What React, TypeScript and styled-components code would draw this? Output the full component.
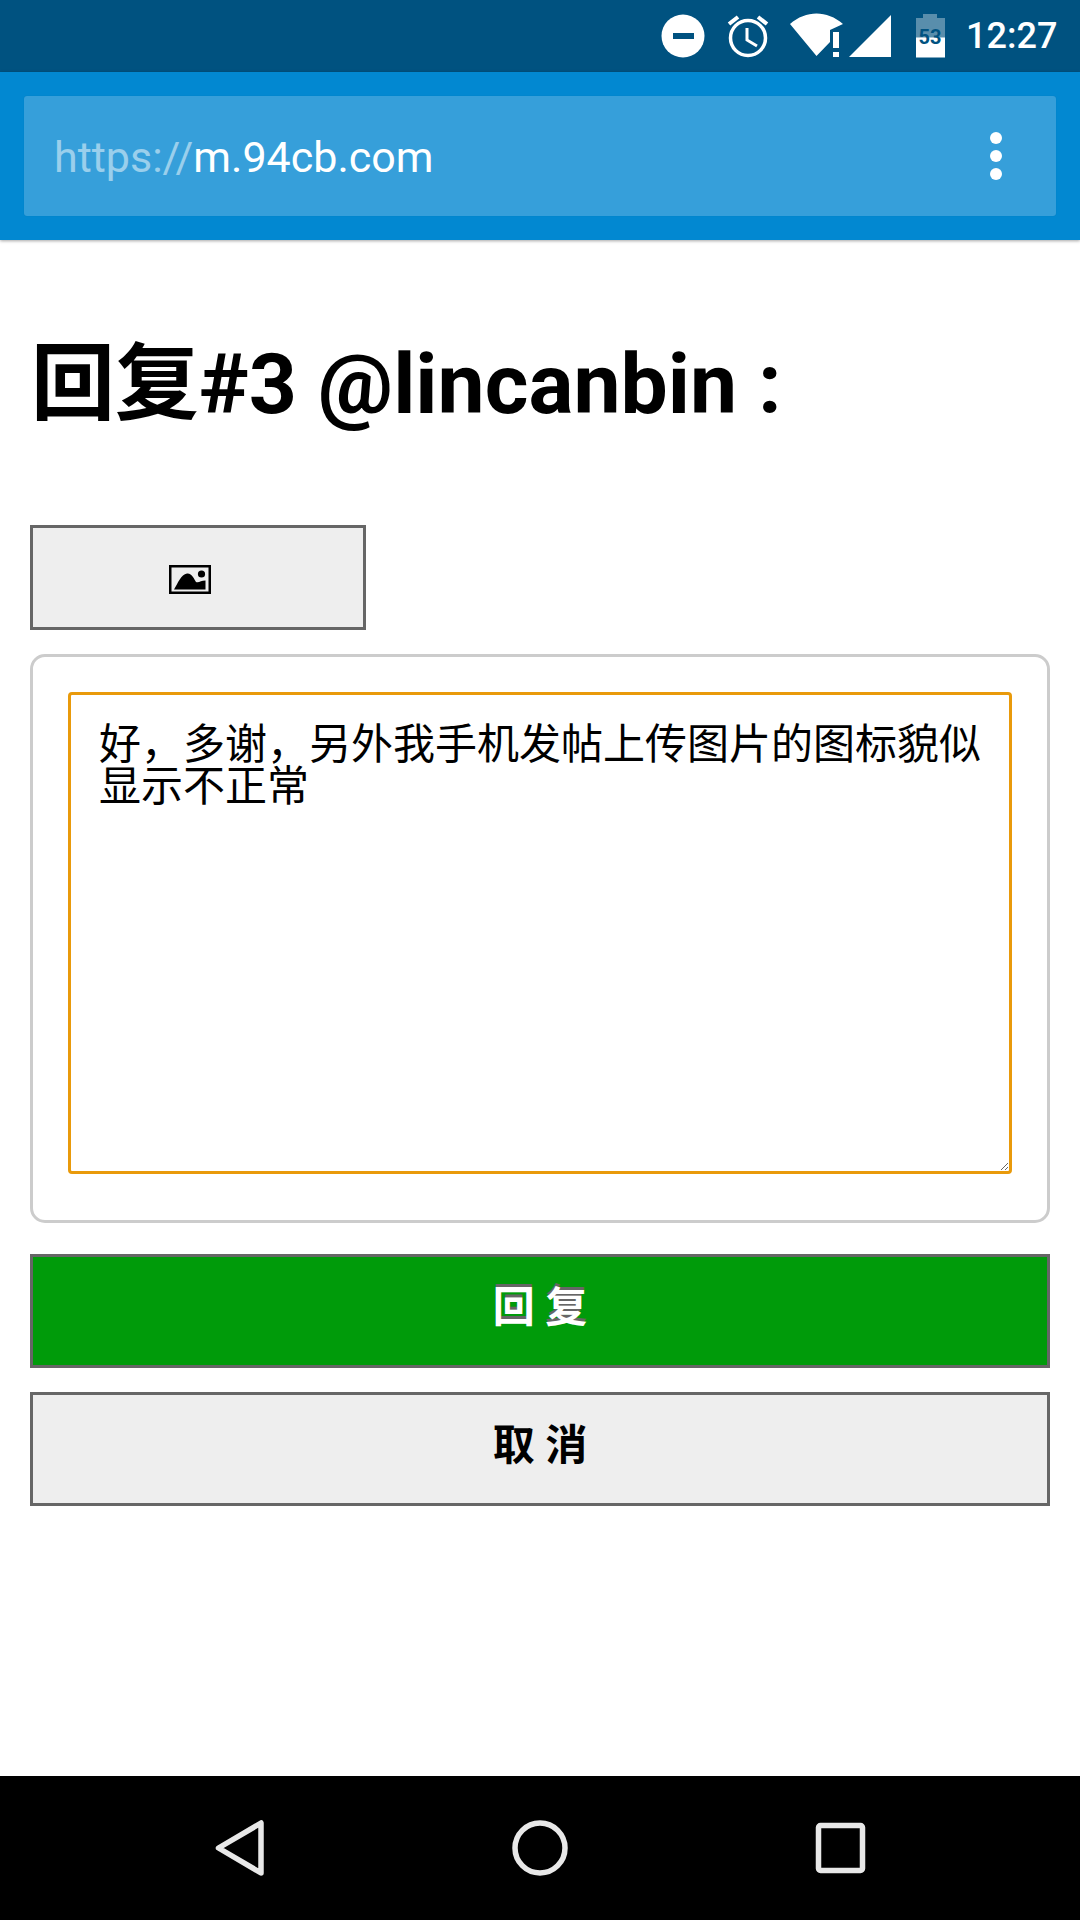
import React from "react";
import styled, { createGlobalStyle } from "styled-components";

const Global = createGlobalStyle`
  html, body { margin: 0; padding: 0; background: #fff; }
  * { box-sizing: border-box; }
`;
const Page = styled.div`
  width: 1080px; height: 1920px; display: flex; flex-direction: column;
  font-family: Roboto, "Noto Sans CJK SC", sans-serif; color: #000; overflow: hidden;
`;
const StatusBar = styled.div`
  height: 72px; background: #005280; display: flex; align-items: center; justify-content: flex-end;
  padding-right: 24px; color: #fff; flex: none;
`;
const StatusIcons = styled.svg`
  width: 310px; height: 72px; display: block; flex: none;
`;
const Time = styled.span`
  font-size: 36px; font-weight: 500; width: 90px; white-space: nowrap; line-height: 72px;
`;
const Toolbar = styled.div`
  height: 168px; background: #0288d1; padding: 24px; box-shadow: 0 1px 3px rgba(0,0,0,.35);
  position: relative; flex: none;
`;
const UrlBox = styled.div`
  height: 120px; border-radius: 3px; background: #369fda; display: flex; align-items: center;
  justify-content: space-between; padding: 0 54px 0 30px; box-shadow: 0 0 1px rgba(0,0,0,.15);
`;
const Url = styled.div`
  font-size: 43px; color: #fff; line-height: 120px; padding-top: 2px; white-space: nowrap;
`;
const Scheme = styled.span`
  color: rgba(255,255,255,.5);
`;
const Dots = styled.div`
  display: flex; flex-direction: column; gap: 6px;
`;
const Dot = styled.span`
  width: 12px; height: 12px; border-radius: 50%; background: #fff; display: block;
`;
const Main = styled.main`
  flex: 1; padding: 0 30px; display: flex; flex-direction: column; align-items: stretch;
`;
const Title = styled.h1`
  margin: 96px 0 0 1px; font-size: 84px; line-height: 98px; font-weight: 700; white-space: nowrap;
`;
const Button = styled.button<{ $green?: boolean }>`
  display: flex; align-items: center; justify-content: center; padding: 0 0 6px; border: 3px solid #666;
  height: 114px; background: ${p => (p.$green ? "#009b0a" : "#eee")};
  color: ${p => (p.$green ? "#fff" : "#000")};
  font: 700 42px/1 Roboto, "Noto Sans CJK SC", sans-serif;
  text-shadow: ${p => (p.$green ? "0 -3px 0 #666" : "none")};
`;
const ImageButton = styled(Button)`
  width: 336px; height: 105px; margin-top: 91px; padding: 4px 17px 0 0;
`;
const ImageIcon = styled.svg`
  width: 42px; height: 29px; display: block;
`;
const Card = styled.div`
  margin-top: 24px; height: 569px; border: 3px solid #ccc; border-radius: 15px; padding: 35px 35px 46px;
  display: flex;
`;
const Editor = styled.textarea`
  flex: 1; display: block; border: 3px solid #e99a0b; border-radius: 4px; outline: none; padding: 29px 28px 25px;
  font: 400 42px/42px Roboto, "Noto Sans CJK SC", sans-serif; color: #000; background: #fff; margin: 0;
`;
const ActionButton = styled(Button)`
  flex: none;
`;
const ReplyButton = styled(ActionButton)`
  margin-top: 31px;
`;
const CancelButton = styled(ActionButton)`
  margin-top: 24px;
`;
const NavBar = styled.nav`
  height: 144px; background: #000; flex: none; display: block;
`;
const NavIcons = styled.svg`
  width: 1080px; height: 144px; display: block;
`;

export default function App() {
  return (
    <Page>
      <Global />
      <StatusBar>
        <StatusIcons viewBox="0 0 310 72">
          <g transform="translate(-656 0)" fill="#fff">
            <circle cx="683" cy="36" r="21.5" />
            <rect x="673" y="33" width="21" height="6" fill="#005280" />
            <circle cx="748" cy="38" r="17.500" fill="none" stroke="#fff" strokeWidth="3.500" />
            <path d="M747 28v12l10 6" fill="none" stroke="#fff" strokeWidth="3" />
            <path d="M729 24l9-7M767 24l-9-7" stroke="#fff" strokeWidth="4" fill="none" />
            <path d="M790 24C806 10 827 10 843 24L830 30V42L816.500 56Z" />
            <rect x="833" y="32" width="6" height="16" />
            <rect x="833" y="52" width="6" height="5" />
            <path d="M849 57L891 15V57Z" />
            <path d="M916 18h7v-4h14v4h8v20h-29z" fill="#fff" fillOpacity=".35" />
            <rect x="916" y="37.500" width="29" height="20" />
            <text x="930" y="43.500" textAnchor="middle" fontFamily="Roboto" fontWeight="700" fontSize="20" fill="#005280">53</text>
          </g>
        </StatusIcons>
        <Time>12:27</Time>
      </StatusBar>
      <Toolbar>
        <UrlBox>
          <Url><Scheme>https://</Scheme>m.94cb.com</Url>
          <Dots><Dot /><Dot /><Dot /></Dots>
        </UrlBox>
      </Toolbar>
      <Main>
        <Title>回复#3 @lincanbin :</Title>
        <ImageButton>
          <ImageIcon viewBox="0 0 42 29">
            <rect x="1.250" y="1.250" width="39.500" height="26.500" fill="#eee" stroke="#000" strokeWidth="2.500" />
            <circle cx="32.500" cy="9" r="3.600" />
            <path d="M5 24.500C9 18 12 9.500 18 8.500C23 8 25 14 27 17C30 18 32 15.500 36.500 15.500V24.500Z" />
          </ImageIcon>
        </ImageButton>
        <Card>
          <Editor readOnly value="好，多谢，另外我手机发帖上传图片的图标貌似显示不正常" />
        </Card>
        <ReplyButton $green>回 复</ReplyButton>
        <CancelButton>取 消</CancelButton>
      </Main>
      <NavBar>
        <NavIcons viewBox="0 0 1080 144">
          <g fill="none" stroke="#e8e8e8" strokeLinejoin="round">
            <path d="M261 47V97L218.500 72Z" strokeWidth="5.500" />
            <circle cx="540" cy="72" r="25" strokeWidth="5.500" />
            <rect x="818.500" y="49.500" width="44" height="45" rx="2" strokeWidth="5.500" />
          </g>
        </NavIcons>
      </NavBar>
    </Page>
  );
}
